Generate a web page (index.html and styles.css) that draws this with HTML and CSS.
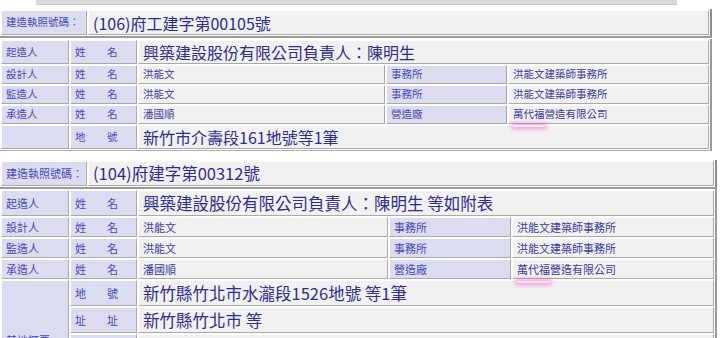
FILE: index.html
```html
<!DOCTYPE html>
<html lang="zh-Hant">
<head>
<meta charset="utf-8">
<link rel="stylesheet" href="styles.css">
</head>
<body>
<div class="strip"></div>

<section class="permit permit-a">
  <table class="head">
    <tr>
      <th class="lbl hlbl">建造執照號碼：</th>
      <td class="val big">(106)府工建字第00105號</td>
    </tr>
  </table>
  <table class="data">
    <colgroup><col class="c1"><col class="c2"><col class="c3"><col class="c4"><col class="c5"></colgroup>
    <tr class="tall">
      <th class="lbl">起造人</th>
      <th class="lbl kv"><span>姓</span><span>名</span></th>
      <td class="val big" colspan="3">興築建設股份有限公司負責人：陳明生</td>
    </tr>
    <tr>
      <th class="lbl">設計人</th>
      <th class="lbl kv"><span>姓</span><span>名</span></th>
      <td class="val">洪能文</td>
      <th class="lbl">事務所</th>
      <td class="val">洪能文建築師事務所</td>
    </tr>
    <tr>
      <th class="lbl">監造人</th>
      <th class="lbl kv"><span>姓</span><span>名</span></th>
      <td class="val">洪能文</td>
      <th class="lbl">事務所</th>
      <td class="val">洪能文建築師事務所</td>
    </tr>
    <tr>
      <th class="lbl">承造人</th>
      <th class="lbl kv"><span>姓</span><span>名</span></th>
      <td class="val">潘國順</td>
      <th class="lbl">營造廠</th>
      <td class="val open"><span class="mark">萬代福</span>營造有限公司</td>
    </tr>
    <tr class="tall">
      <th class="lbl"></th>
      <th class="lbl kv"><span>地</span><span>號</span></th>
      <td class="val big" colspan="3">新竹市介壽段161地號等1筆</td>
    </tr>
  </table>
</section>

<section class="permit permit-b">
  <table class="head">
    <tr>
      <th class="lbl hlbl">建造執照號碼：</th>
      <td class="val big">(104)府建字第00312號</td>
    </tr>
  </table>
  <table class="data">
    <colgroup><col class="c1"><col class="c2"><col class="c3"><col class="c4"><col class="c5"></colgroup>
    <tr class="tall">
      <th class="lbl">起造人</th>
      <th class="lbl kv"><span>姓</span><span>名</span></th>
      <td class="val big" colspan="3">興築建設股份有限公司負責人：陳明生 等如附表</td>
    </tr>
    <tr>
      <th class="lbl">設計人</th>
      <th class="lbl kv"><span>姓</span><span>名</span></th>
      <td class="val">洪能文</td>
      <th class="lbl">事務所</th>
      <td class="val">洪能文建築師事務所</td>
    </tr>
    <tr>
      <th class="lbl">監造人</th>
      <th class="lbl kv"><span>姓</span><span>名</span></th>
      <td class="val">洪能文</td>
      <th class="lbl">事務所</th>
      <td class="val">洪能文建築師事務所</td>
    </tr>
    <tr>
      <th class="lbl">承造人</th>
      <th class="lbl kv"><span>姓</span><span>名</span></th>
      <td class="val">潘國順</td>
      <th class="lbl">營造廠</th>
      <td class="val open"><span class="mark">萬代福</span>營造有限公司</td>
    </tr>
    <tr class="tall">
      <th class="lbl site" rowspan="4">基地概要</th>
      <th class="lbl kv"><span>地</span><span>號</span></th>
      <td class="val big" colspan="3">新竹縣竹北市水瀧段1526地號 等1筆</td>
    </tr>
    <tr class="tall">
      <th class="lbl kv"><span>址</span><span>址</span></th>
      <td class="val big" colspan="3">新竹縣竹北市 等</td>
    </tr>
    <tr class="tall">
      <th class="lbl kv"><span></span><span></span></th>
      <td class="val big" colspan="3"></td>
    </tr>
    <tr class="tall">
      <th class="lbl kv"><span></span><span></span></th>
      <td class="val big" colspan="3"></td>
    </tr>
  </table>
</section>
</body>
</html>
```

FILE: styles.css
```css
html, body {
  margin: 0;
  padding: 0;
  background: #ffffff;
  overflow: hidden;
}
body {
  width: 720px;
  height: 338px;
  font-family: "Noto Sans CJK TC", "Noto Sans", sans-serif;
  color: #34349a;
}
.strip {
  margin-left: 36px;
  width: 641px;
  height: 4px;
  background: #d9d9d9;
  border-bottom: 1px solid #c8c8c8;
}
.permit-a {
  margin-top: 4px;
  width: 712px;
}
.permit-b {
  margin-top: 9px;
  width: 717px;
}
table {
  border-collapse: separate;
  border-spacing: 1px;
  table-layout: fixed;
  width: 100%;
  background: #ffffff;
}
.head {
  border-right: 2px solid #8e8e8e;
  border-bottom: 2px solid #9a9a9a;
}
.head tr { height: 25px; }
.data {
  margin-top: 1px;
  border-right: 2px solid #9a9a9a;
  border-bottom: 1px solid #b0b0b0;
}
th, td {
  padding: 0 0 0 4px;
  border: 1px solid;
  border-color: #ffffff #a9a9a9 #a9a9a9 #ffffff;
  text-align: left;
  font-weight: normal;
  white-space: nowrap;
  overflow: hidden;
  vertical-align: middle;
  line-height: 1;
}
td.open { overflow: visible; }
.lbl {
  background: #dcdcf0;
  font-size: 10.5px;
  color: #4848b4;
}
.hlbl {
  width: 80px;
}
.val {
  background: #f1f1f1;
  font-size: 10.5px;
  color: #3a3aa0;
}
.big {
  font-size: 16px;
  color: #2d2d8c;
  padding-left: 4px;
}
.data tr { height: 19px; }
.data tr.tall { height: 24px; }
.permit-b .head tr { height: 25px; }
.permit-b .data { margin-top: 0; }
.permit-b .data tr { height: 20px; }
.permit-b .data tr.tall { height: 26px; }
.permit-b .lbl, .permit-b .val { font-size: 11px; }
.permit-b .big { font-size: 16.5px; }
.c1 { width: 68px; }
.c2 { width: 67px; }
.permit-a .c3 { width: 247px; }
.permit-b .c3 { width: 250px; }
.permit-a .c4 { width: 121px; }
.permit-b .c4 { width: 122px; }
.kv span {
  display: inline-block;
  width: 32px;
}
.site {
  padding-top: 14px;
}
.mark {
  position: relative;
}
.mark::after {
  content: "";
  position: absolute;
  left: 0;
  right: 0;
  bottom: -6px;
  height: 2px;
  border-radius: 2px;
  background: #fbe6f4;
  box-shadow: 0 0 4px 2px rgba(240, 80, 190, 0.55);
}
```
